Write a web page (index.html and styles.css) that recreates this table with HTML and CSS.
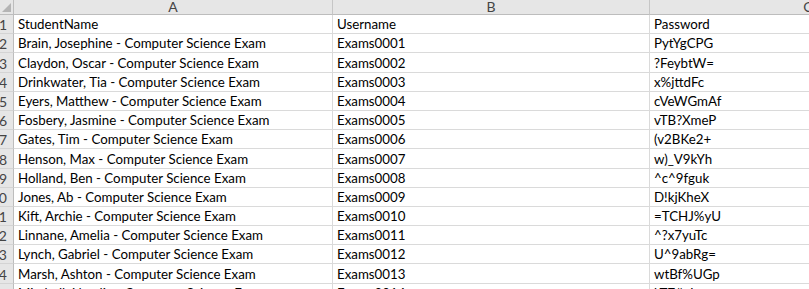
FILE: index.html
```html
<!DOCTYPE html>
<html>
<head>
<meta charset="utf-8">
<link rel="stylesheet" href="styles.css">
</head>
<body>
<div class="sheet">
  <div class="corner"><span class="tri"></span></div>
  <div class="colhead">A</div>
  <div class="colhead">B</div>
  <div class="colhead">C</div>

  <div class="rowhead"><span>1</span></div>
  <div class="cell">StudentName</div><div class="cell">Username</div><div class="cell">Password</div>

  <div class="rowhead"><span>2</span></div>
  <div class="cell">Brain, Josephine - Computer Science Exam</div><div class="cell">Exams0001</div><div class="cell">PytYgCPG</div>

  <div class="rowhead"><span>3</span></div>
  <div class="cell">Claydon, Oscar - Computer Science Exam</div><div class="cell">Exams0002</div><div class="cell">?FeybtW=</div>

  <div class="rowhead"><span>4</span></div>
  <div class="cell">Drinkwater, Tia - Computer Science Exam</div><div class="cell">Exams0003</div><div class="cell">x%jttdFc</div>

  <div class="rowhead"><span>5</span></div>
  <div class="cell">Eyers, Matthew - Computer Science Exam</div><div class="cell">Exams0004</div><div class="cell">cVeWGmAf</div>

  <div class="rowhead"><span>6</span></div>
  <div class="cell">Fosbery, Jasmine - Computer Science Exam</div><div class="cell">Exams0005</div><div class="cell">vTB?XmeP</div>

  <div class="rowhead"><span>7</span></div>
  <div class="cell">Gates, Tim - Computer Science Exam</div><div class="cell">Exams0006</div><div class="cell">(v2BKe2+</div>

  <div class="rowhead"><span>8</span></div>
  <div class="cell">Henson, Max - Computer Science Exam</div><div class="cell">Exams0007</div><div class="cell">w)_V9kYh</div>

  <div class="rowhead"><span>9</span></div>
  <div class="cell">Holland, Ben - Computer Science Exam</div><div class="cell">Exams0008</div><div class="cell">^c^9fguk</div>

  <div class="rowhead"><span>10</span></div>
  <div class="cell">Jones, Ab - Computer Science Exam</div><div class="cell">Exams0009</div><div class="cell">D!kjKheX</div>

  <div class="rowhead"><span>11</span></div>
  <div class="cell">Kift, Archie - Computer Science Exam</div><div class="cell">Exams0010</div><div class="cell">=TCHJ%yU</div>

  <div class="rowhead"><span>12</span></div>
  <div class="cell">Linnane, Amelia - Computer Science Exam</div><div class="cell">Exams0011</div><div class="cell">^?x7yuTc</div>

  <div class="rowhead"><span>13</span></div>
  <div class="cell">Lynch, Gabriel - Computer Science Exam</div><div class="cell">Exams0012</div><div class="cell">U^9abRg=</div>

  <div class="rowhead"><span>14</span></div>
  <div class="cell">Marsh, Ashton - Computer Science Exam</div><div class="cell">Exams0013</div><div class="cell">wtBf%UGp</div>

  <div class="rowhead"><span>15</span></div>
  <div class="cell">Mitchell, Natalie - Computer Science Exam</div><div class="cell">Exams0014</div><div class="cell">kT7#pLwz</div>
</div>
</body>
</html>
```
FILE: styles.css
```css
html, body {
  margin: 0;
  padding: 0;
  background: #ffffff;
  overflow: hidden;
}

.sheet {
  display: grid;
  grid-template-columns: 14px 319px 317px 317px;
  grid-template-rows: 15px repeat(15, 19.2px);
  font-family: Lato, "Liberation Sans", sans-serif;
  font-size: 13.3px;
  color: #000000;
  width: 967px;
}

.corner {
  position: relative;
  background: #e6e6e6;
  border-right: 1px solid #bdbdbd;
  border-bottom: 1px solid #bdbdbd;
  box-sizing: border-box;
}

.tri {
  position: absolute;
  right: 2px;
  bottom: 2px;
  width: 0;
  height: 0;
  border-left: 9px solid transparent;
  border-bottom: 9px solid #b4b4b4;
}

.colhead {
  background: #e6e6e6;
  border-right: 1px solid #c6c6c6;
  border-bottom: 1px solid #bdbdbd;
  box-sizing: border-box;
  display: flex;
  align-items: center;
  justify-content: center;
  color: #444444;
  font-size: 14px;
  line-height: 14px;
}

.rowhead {
  background: #e6e6e6;
  border-right: 1px solid #bdbdbd;
  border-bottom: 1px solid #d4d4d4;
  box-sizing: border-box;
  display: flex;
  justify-content: flex-end;
  align-items: flex-end;
  overflow: hidden;
  color: #444444;
  font-size: 14px;
  padding-right: 6px;
  padding-bottom: 0;
  line-height: 17px;
}

.rowhead span {
  white-space: nowrap;
}

.cell {
  border-right: 1px solid #dadada;
  border-bottom: 1px solid #dadada;
  box-sizing: border-box;
  display: flex;
  align-items: flex-end;
  padding-left: 4px;
  padding-bottom: 0;
  line-height: 17px;
  white-space: nowrap;
  overflow: hidden;
}
```
